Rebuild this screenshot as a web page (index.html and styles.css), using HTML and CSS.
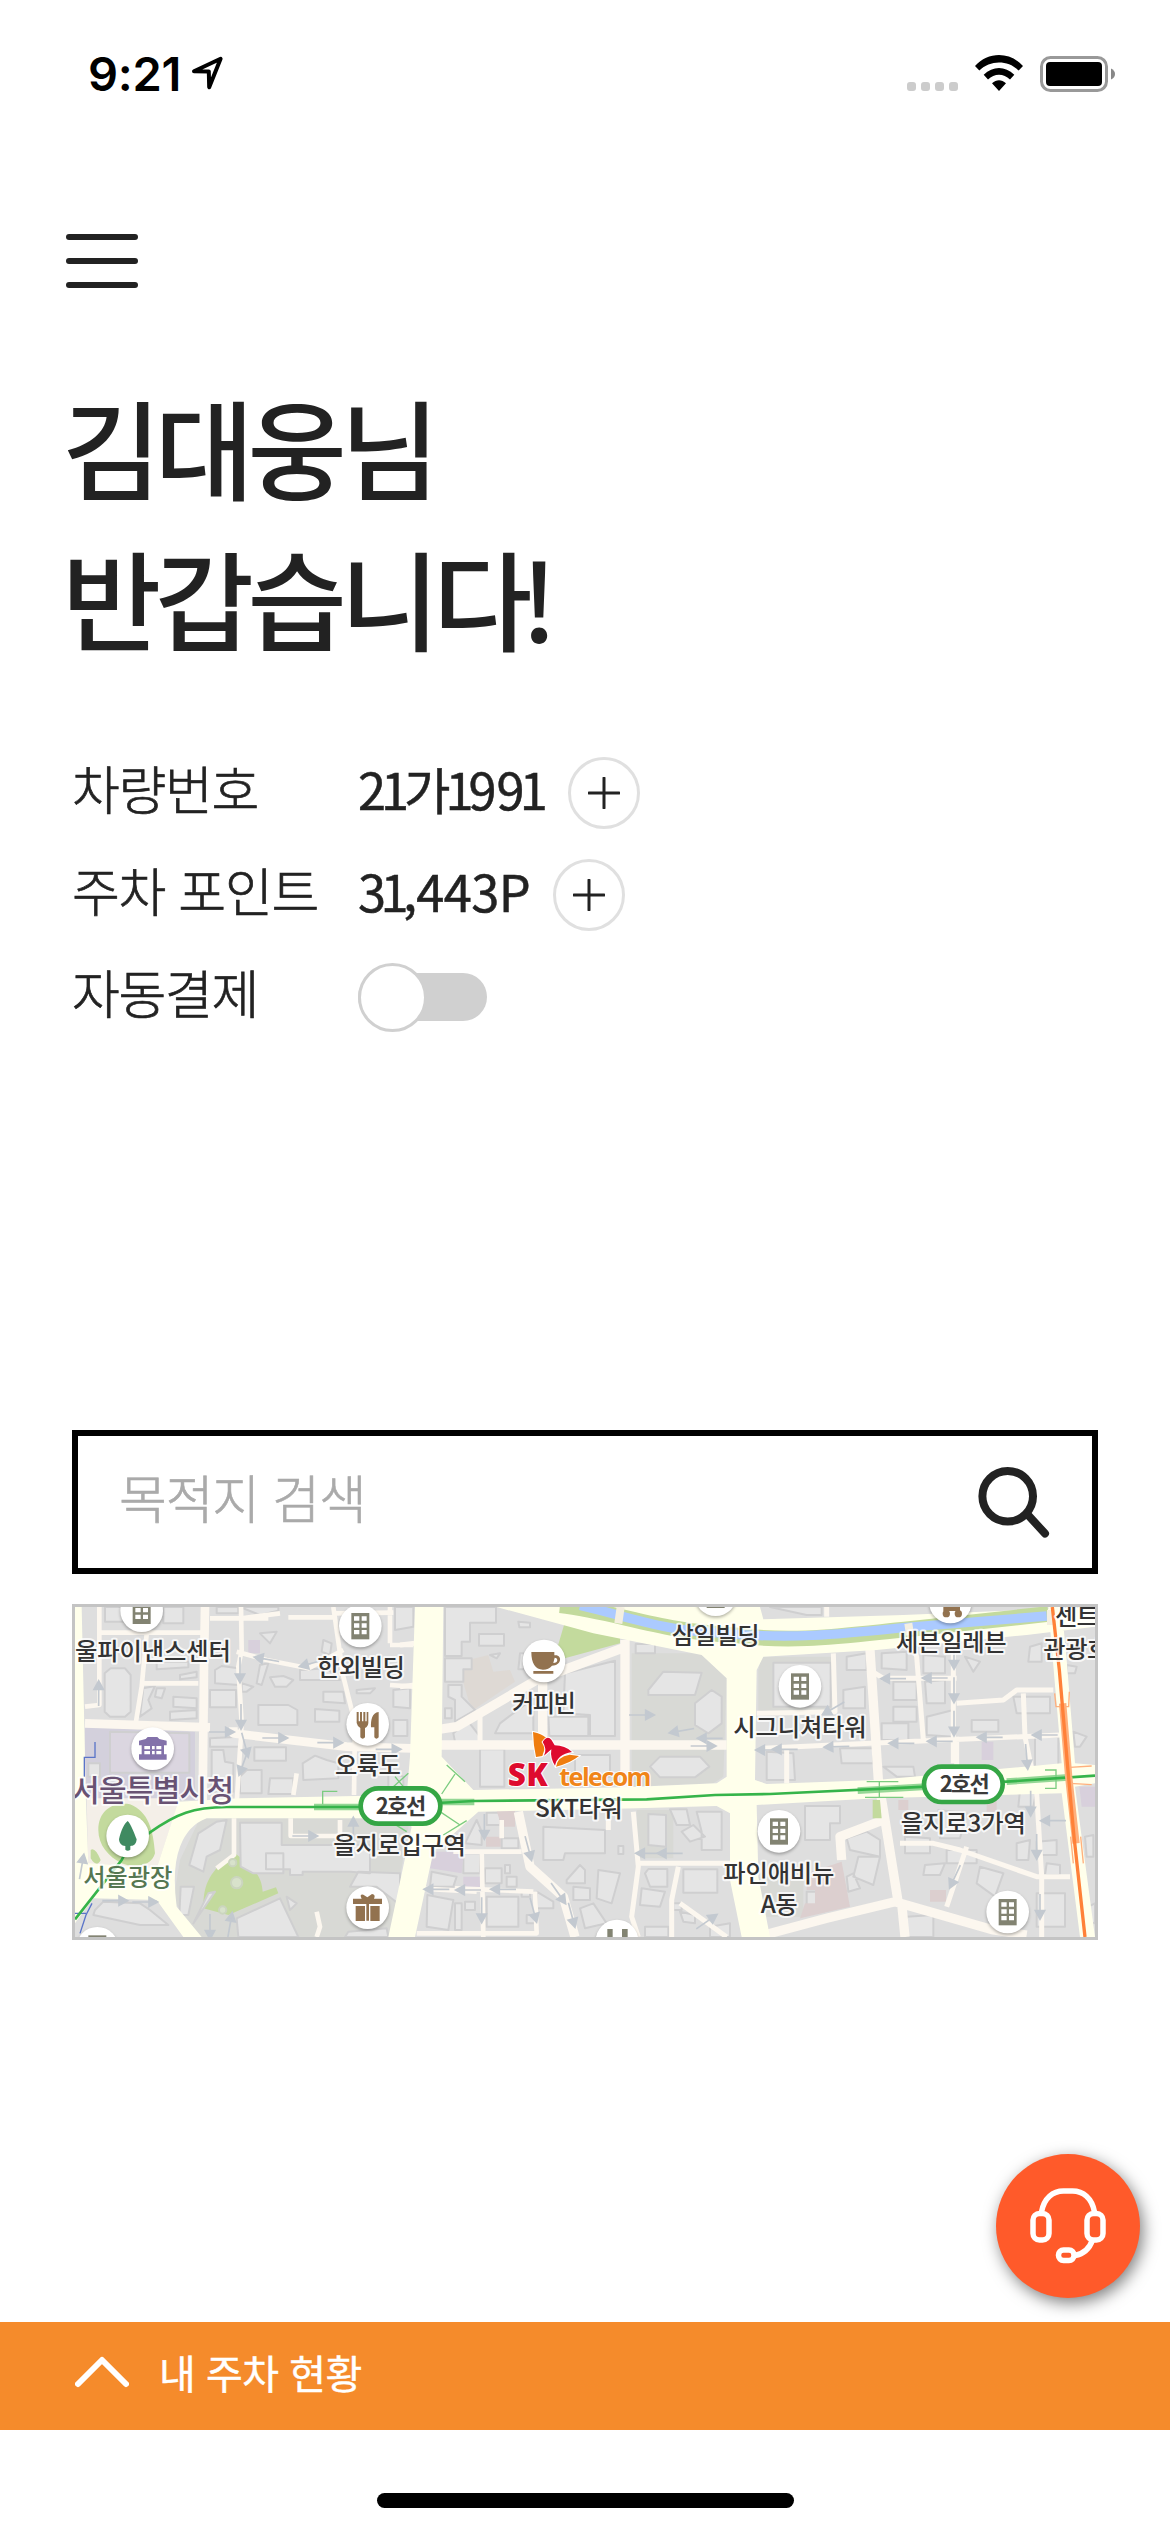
FILE: index.html
```html
<!DOCTYPE html>
<html lang="ko">
<head>
<meta charset="utf-8">
<title>주차</title>
<link rel="stylesheet" href="styles.css">
</head>
<body>
<header class="status">
  <div class="status-left">
    <span class="clock">9:21</span>
    <svg class="location" width="34" height="36" viewBox="0 0 34 36"><path d="M3 16.2 29.6 3.8 18.2 32.3 17.8 16.4Z"/></svg>
  </div>
  <div class="status-right">
    <span class="dots"><i></i><i></i><i></i><i></i></span>
    <svg class="wifi" width="48" height="37" viewBox="0 0 48 37"><path d="M0 11C13-3.6 35-3.6 48 11L43.7 15.5C33 4.8 15 4.8 4.3 15.5ZM8.7 19.8C18 10.7 30 10.7 39.3 19.8L35 24.5C28.600 18 19.400 18 13 24.500ZM17 28.200C21.500 24.300 26.500 24.300 31 28.200L24 36Z"/></svg>
    <svg class="battery" width="76" height="36" viewBox="0 0 76 36"><rect x="1.500" y="1.500" width="65" height="33" rx="9" fill="none" stroke="#999" stroke-width="3"/><rect x="6" y="6" width="56" height="24" rx="4"/><path d="M71 12.500Q75 14.500 75 18T71 23.500Z" fill="#888"/></svg>
  </div>
</header>

<button class="menu" aria-label="메뉴"><i></i><i></i><i></i></button>

<h1 class="greeting">김대웅님<br>반갑습니<span class="tight">다</span>!</h1>

<section class="account">
  <div class="row">
    <span class="label">차량번호</span>
    <span class="value">2<b class="one">1</b>가<b class="one">1</b>99<b class="one">1</b></span>
    <button class="plus" aria-label="추가"><svg width="32" height="32" viewBox="0 0 32 32"><path d="M16 1V31M1 16H31"/></svg></button>
  </div>
  <div class="row">
    <span class="label">주차 포인트</span>
    <span class="value points">3<b class="one">1</b>,443P</span>
    <button class="plus" aria-label="추가"><svg width="32" height="32" viewBox="0 0 32 32"><path d="M16 1V31M1 16H31"/></svg></button>
  </div>
  <div class="row">
    <span class="label">자동결제</span>
    <span class="toggle"><i class="knob"></i></span>
  </div>
</section>

<div class="search">
  <span class="placeholder">목적지 검색</span>
  <svg width="74" height="74" viewBox="0 0 74 74"><circle cx="31.700" cy="31.200" r="25.300"/><path d="M52 50 69 68.500"/></svg>
</div>

<div class="map">
<svg width="1020" height="330" viewBox="45 51 3060 990">
  <defs>
    <g id="pin"><circle class="pin" r="64"/></g>
    <g id="office"><circle class="pin" r="64"/><path fill="#828372" d="M-27-39H27V40H-27Z"/><path fill="#fff" d="M-19-29H-3V-16H-19ZM4-29H19V-16H4ZM-19-8H-3V5H-19ZM4-8H19V5H4ZM-19 12H-3V25H-19ZM4 12H19V25H4Z"/></g>
    <path id="arrow" class="arrow" d="M-38 0H20M12-14 38 0 12 14Z"/>
  </defs>
  <rect x="45" y="51" width="3060" height="990" fill="#dedede"/>

  <!-- special land -->
  <path fill="#d8d9d5" d="M420 685H1050L990 1041H420L340 930 360 810ZM1715 190H1920L2000 265 1990 560 1960 580 1715 590ZM2105 200H2315V365H2095V240ZM1730 660H1840V805H1730ZM2090 860H2230V980H2120Z"/>
  <path fill="#d3d0dc" d="M75 412 405 425V630H75Z"/>
  <path fill="#f4efe8" d="M80 625H360L290 835H85Z"/>
  <path fill="#ded9d4" d="M1225 210 1285 195 1300 245 1350 240 1365 275 1240 360 1225 330 1205 260Z"/>
  <path fill="#c3da9d" d="M115 720C115 660 160 635 210 643 265 665 280 720 285 790 275 830 220 835 185 820 145 800 115 765 115 720ZM92 780Q105 770 122 810 110 835 92 805ZM525 790C570 825 605 850 608 905L648 892 655 910 505 975 430 955C430 880 450 840 525 790ZM1515 95 1680 130V160L1495 210 1490 180Z"/>

  <!-- blocks of buildings -->
  <g class="building">
    <path fill="#dbd6e0" d="M150 425 388 430V548H150Z"/>
    <path d="M134 250 152 235H195L212 255V365L195 380H150L134 365ZM135 51H205V95H135ZM310 51H370V100H310ZM470 51H535V70H470ZM465 240 485 228 535 235V285L465 280ZM450 300H528V352H450ZM595 345H685L712 360V405H595ZM765 357 838 362V395H765ZM583 472H678V512H583ZM450 445 538 440V470H450ZM455 480H490L495 515 520 520V605H455ZM540 560 560 540H605V610H540ZM630 565H700V612H625ZM728 520 765 497 800 510 835 520V565L730 570ZM1000 300 1050 295V355L1000 350ZM1000 390H1042V438H1000ZM985 545 1030 560V595H985ZM1005 51H1060V110L1005 120ZM340 320 410 325V355L340 350ZM330 365 410 360V385L330 390ZM250 295 285 288 265 330 275 355 240 380ZM290 295H315L305 325 285 320ZM600 225 625 220 605 285 590 280ZM600 130 650 125 630 160ZM630 262 670 258 700 270 680 290H645ZM545 280 580 290 560 305H545ZM790 150 815 160 810 195 785 185ZM790 305H850L855 340 790 335ZM890 300 945 295 930 310H890ZM720 240 800 235 840 270H720ZM290 215H385V232L290 238ZM360 255 410 245V262L360 268ZM540 51H655V62L600 75Z"/>
    <path d="M85 520H120V560H85ZM105 960 130 935 240 940 270 960 325 1005H240L100 975ZM362 890H402L385 975 358 975ZM415 730 470 695 500 690 480 780 440 800 430 845 388 825ZM540 698H665V765H930V850L870 845H728V855H690V838H618V790H670V850H580L542 830ZM870 890 895 845 1020 850V945L950 890ZM680 920 710 940 690 960ZM530 985 660 925 715 1041H535ZM865 1025 980 1015 985 1041H855ZM445 910 465 905 400 1000Z"/>
    <path d="M1155 51H1308V98H1230V155H1205V198H1155ZM1155 205H1235V238H1210V275H1155ZM1257 132H1332V167H1257ZM1375 95 1410 98V112H1378ZM1290 195 1320 190 1310 205ZM1165 285H1205V320L1245 360 1185 395V330L1165 320ZM1155 355H1175V385H1155ZM1260 478H1333V590H1260ZM1180 430 1225 395 1260 440V460L1185 455ZM1320 400 1420 325V430H1305ZM1465 380H1585V438H1468ZM1380 190H1410V238H1375ZM1515 250 1665 212V438H1590V375L1510 370ZM1545 495H1650V560H1545ZM1727 162H1785V190H1727ZM1765 300 1810 245 1925 248 1905 315H1765ZM1905 340 1955 300 1985 320V400L1945 430 1905 405ZM1770 530 1800 500H1920L1948 530 1905 562H1800ZM1450 710 1635 720V790H1515L1510 810H1450ZM1765 672 1818 675V770L1765 765ZM1830 658H1880L1890 705H1850ZM1910 665H1985V780H1925V725ZM1865 725 1900 705 1935 740 1890 755ZM1615 840 1680 850 1655 940 1610 925ZM1520 870 1560 825 1575 840V880H1520ZM1540 890 1590 895V930H1540ZM1675 768H1690V792H1675ZM1755 850 1765 837H1822V890H1770ZM1745 895 1815 905 1800 950 1740 945ZM1870 838H1972V908H1870ZM1755 1010H1825V1041H1755ZM1860 965 1905 975V1000L1870 995ZM1950 1010 2010 1000V1041H1950ZM1840 940H1865V960H1840Z"/>
    <path d="M1102 915 1180 930 1165 1020 1100 1010ZM1280 920H1375V1010H1280ZM1210 790H1260V850H1210ZM1115 845 1190 860 1180 890H1110ZM1275 835H1325V880H1275ZM1340 860H1370V890H1340ZM1280 668H1320V705H1280ZM1325 745H1375V775H1325ZM1215 760 1250 690 1265 725V765ZM1430 905 1480 935V955H1430ZM1185 940H1205V1020H1185ZM1215 935H1245V960H1215ZM1400 975H1425V1000H1400ZM1560 955 1600 940 1640 1000 1575 1015ZM1335 825H1350V850H1335ZM1385 905H1410V920H1385Z"/>
    <path d="M2140 218H2312V350H2140ZM2350 300 2415 290V355H2350ZM2360 200 2420 190V240H2360ZM2120 485 2200 490 2205 570H2120ZM2340 475H2440V520H2345ZM2235 648H2340V700H2310V750H2235ZM2470 530H2560L2565 560H2510ZM2500 275H2570V330H2500ZM2500 350H2570V395H2500ZM2465 400H2545V450H2465ZM2595 275 2655 270V340H2600ZM2600 380 2680 360V440L2600 435ZM2465 190 2540 185V240L2465 235ZM2590 195 2655 200V250H2590ZM2735 390H2815V425H2735ZM2860 320H2970V370H2870ZM2925 440H2995V530H2925ZM2930 910H3015V1010H2930ZM2760 830 2830 850 2805 920 2750 880ZM2635 660 2720 670 2700 745 2640 745ZM2535 740 2610 745V790H2535ZM2595 825 2655 820 2640 855H2590ZM2360 745 2420 725 2460 750V800L2370 780ZM2395 800H2460L2440 885 2380 860ZM2360 860 2380 850 2400 895 2365 905ZM2540 980 2620 975V1041H2540ZM2715 200 2760 215 2740 245ZM2910 170 2945 160V215H2905ZM2240 905H2275V960H2240ZM3040 425 3080 440 3060 470H3045ZM3020 225 3050 230 3045 250H3020ZM2930 755 2990 750V795H2930ZM2960 820 3000 825V855H2955ZM3075 740 3100 735V800H3080ZM3085 950 3105 940V1000L3085 995ZM2660 780H2750V820H2660ZM2870 760 2910 750 2905 810H2870ZM2130 51H2285V75H2240ZM2880 600 2930 595 2920 650H2875Z"/>
  </g>
  <path fill="#d8d0dc" d="M1120 785H1212L1205 850 1110 835ZM1210 860H1260V893H1210ZM2765 455H2800V510H2765ZM3058 590H3105V650H3065ZM565 150H600V190H565Z"/>
  <path fill="#dccfcf" d="M1310 662H1365V710H1325ZM1278 740H1322V770H1278ZM2240 850 2345 815 2370 950 2220 985 2235 940H2265V900H2240ZM2515 630H2545V660H2515ZM2780 630H2810V665H2780ZM2610 900H2658V935H2610Z"/>

  <!-- side streets -->
  <g class="street">
    <path stroke-width="26" d="M75 400 450 412M435 51 432 230 428 640M520 412 520 430 860 470 1055 475"/>
    <path stroke-width="14" d="M118 51V345L75 350M118 128H430M450 85H625M685 82H820M262 110 245 290 228 395M250 280H415M543 51 545 180 535 230 545 400 530 640M530 185 620 210 745 235 850 180M545 85 660 70M820 51 850 260 885 400 882 615M820 70 1000 68M990 51V160M990 165H1060M990 285 1060 290M700 615 710 550M522 685V795L470 835M692 685V738H840V690M770 965 780 1010 770 1041M1185 895 1420 905M1265 780 1270 1041M1180 785H1385M1325 690V745M1070 1030H1430L1425 905M1250 905 1070 895"/>
    <path stroke-width="28" d="M1125 465H2000M1125 420 1190 410 1430 270 1700 170M1695 150V630M1448 260V465M1375 665 1410 830 1510 920 1545 1041"/>
    <path stroke-width="15" d="M1020 165 1065 160M1020 290 1065 285M1735 820H2020M1720 665 1735 830 1715 980 1735 1041M1855 830 1835 930 1835 1041M1860 940 1930 990 2000 1041M1645 670V720M1260 380V465M2300 51V80M2320 190 2325 365 2090 370M2180 470V580M2540 110 2570 200 2590 450M2680 190V520M2690 340 2830 330 2870 300H2980M2890 310 2895 440 2930 610 2945 860V1041M2520 760 2620 760 2700 780 2930 860H3030M2720 770 2660 950M2110 475 2430 460 3000 435M2690 440V530M2430 240 2470 265H2690"/>
    <path stroke-width="28" d="M2430 180 2455 570 2475 690 2515 940M2090 1041 2300 985 2505 935 2800 1020 2900 1035M2525 940 2535 1041M2345 810 2340 740 2470 690"/>
  </g>

  <!-- avenues -->
  <g fill="#ffffeb">
    <path d="M45 51H65L78 640 85 820 290 835 355 635 540 625 1040 615 1050 500 1065 51H1150L1145 500 1240 600 1700 592 1970 580 2000 560V265L1925 195 1600 130 1310 51H2100L2110 88 2530 75 3105 51V110L2900 135 2450 180 2110 200 2090 240 2085 570 2120 582 2450 570 3005 520 2965 51H3005L3020 210 3045 520 3105 525V580L3045 590 3105 1041H3060L3005 610 2450 625 2090 645 2095 860 2130 1041H2045L2010 870 2010 670 1970 648 1730 655 1400 662 1255 665 1120 785 1065 1041H985L1055 710 1020 685H440Q385 705 360 770T350 950L425 1041H370L290 930 100 925 45 1000Z"/>
  </g>

  <!-- stream and its banks -->
  <path fill="none" stroke="#c3da9d" stroke-width="47" d="M1500 46C1670 65 1800 125 2020 135 2200 160 2350 137 2540 118L2965 72"/>
  <path fill="none" stroke="#abcaff" stroke-width="28" d="M1560 46C1690 75 1800 120 1960 128 2200 150 2350 132 2540 112L2960 78"/>
  <path fill="none" stroke="#f4efe0" stroke-width="24" d="M1682 51 1675 100M2545 100 2550 135M2973 60V105"/>
  <path fill="#c3da9d" d="M2438 630H2460L2465 685H2438Z"/>
  <circle cx="530" cy="878" r="17" class="fountain"/><circle cx="518" cy="818" r="11" class="fountain"/><circle cx="488" cy="960" r="11" class="fountain"/>

  <!-- one-way arrows -->
  <use href="#arrow" x="485" y="426"/><use href="#arrow" x="645" y="444"/><use href="#arrow" x="810" y="458"/><use href="#arrow" x="985" y="478"/><use href="#arrow" x="735" y="738"/><use href="#arrow" x="165" y="932"/><use href="#arrow" x="255" y="936"/>
  <use href="#arrow" x="1745" y="375"/><use href="#arrow" x="1930" y="468"/>
  <use href="#arrow" transform="translate(1950 445) rotate(180)"/><use href="#arrow" transform="translate(1865 422) rotate(170)"/><use href="#arrow" transform="translate(1765 790) rotate(180)"/><use href="#arrow" transform="translate(1830 790) rotate(180)"/>
  <use href="#arrow" transform="translate(116 310) rotate(-90)"/><use href="#arrow" transform="translate(540 240) rotate(90)"/><use href="#arrow" transform="translate(543 380) rotate(90)"/><use href="#arrow" transform="translate(555 465) rotate(75)"/><use href="#arrow" transform="translate(550 520) rotate(110)"/><use href="#arrow" transform="translate(620 208) rotate(190)"/><use href="#arrow" transform="translate(755 220) rotate(165)"/><use href="#arrow" transform="translate(880 720) rotate(-90)"/><use href="#arrow" transform="translate(65 830) rotate(-80)"/>
  <use href="#arrow" transform="translate(1273 710) rotate(90)"/><use href="#arrow" transform="translate(1405 775) rotate(75)"/><use href="#arrow" transform="translate(1225 900) rotate(180)"/><use href="#arrow" transform="translate(1330 898) rotate(180)"/><use href="#arrow" transform="translate(1130 898) rotate(180)"/><use href="#arrow" transform="translate(1265 960) rotate(90)"/><use href="#arrow" transform="translate(1420 960) rotate(75)"/><use href="#arrow" transform="translate(1495 910) rotate(55)"/><use href="#arrow" transform="translate(1535 975) rotate(75)"/><use href="#arrow" transform="translate(1940 995) rotate(-35)"/><use href="#arrow" transform="translate(450 1010) rotate(90)"/><use href="#arrow" transform="translate(510 1005) rotate(-80)"/>
  <use href="#arrow" transform="translate(2500 266) rotate(180)"/><use href="#arrow" transform="translate(2625 264) rotate(180)"/><use href="#arrow" transform="translate(2682 200) rotate(90)"/><use href="#arrow" transform="translate(2682 300) rotate(90)"/><use href="#arrow" transform="translate(2682 400) rotate(90)"/><use href="#arrow" transform="translate(2320 355) rotate(150)"/><use href="#arrow" transform="translate(2125 480) rotate(180)"/><use href="#arrow" transform="translate(2175 478) rotate(180)"/><use href="#arrow" transform="translate(2330 470) rotate(178)"/><use href="#arrow" transform="translate(2525 460) rotate(180)"/><use href="#arrow" transform="translate(2640 454) rotate(180)"/><use href="#arrow" transform="translate(2790 442) rotate(180)"/><use href="#arrow" transform="translate(2955 435) rotate(180)"/><use href="#arrow" transform="translate(2900 500) rotate(85)"/><use href="#arrow" transform="translate(2912 640) rotate(90)"/><use href="#arrow" transform="translate(2930 770) rotate(90)"/><use href="#arrow" transform="translate(2940 950) rotate(90)"/><use href="#arrow" transform="translate(2685 860) rotate(115)"/><use href="#arrow" transform="translate(2980 692) rotate(180)"/>

  <!-- metro lines -->
  <path fill="none" stroke="#5b75c8" stroke-width="4" d="M105 456V502H73V560M96 940 78 975 60 1030M45 970H78"/>
  <path fill="none" stroke="#95d795" stroke-width="20" d="M762 651H930M1120 636H1243M2393 602 2600 590M2840 575 3025 562"/>
  <path fill="none" stroke="#7ccc80" stroke-width="4" d="M788 643V604H832M1000 590 1045 550M1005 560 1030 590M1145 612 1185 552M1160 525 1215 575M1140 665 1200 705M1150 735 1220 692M1000 700 1040 725M2420 575H2515M2458 575V622M2415 622H2530M2955 595H2988V540H2955"/>
  <path fill="none" stroke="#36b44a" stroke-width="8" d="M45 988 185 810 200 780 270 727C350 670 400 652 500 651H920L1240 633 1760 628 1965 615 2130 612 2600 590 2840 575 3105 557"/>
  <path fill="none" stroke="#ffb07d" stroke-width="22" d="M3008 340 3026 560 3048 760"/>
  <path fill="none" stroke="#ffb07d" stroke-width="4" d="M2984 310 2988 350H3026L3028 305M3030 532 3095 528M3030 580 3095 584M3032 740 3040 820M3062 740 3070 820"/>
  <path fill="none" stroke="#ff8138" stroke-width="10" d="M2977 51 2998 240 3022 520 3042 740 3075 1041"/>

  <!-- pins -->
  <use href="#office" x="245" y="62"/><use href="#office" x="901" y="108"/><use href="#office" x="2220" y="289"/><use href="#office" x="2157" y="724"/><use href="#office" x="2843" y="966"/><use href="#office" x="1967" y="14"/><use href="#office" x="112" y="1075"/>
  <use href="#pin" x="278" y="476"/><path fill="#8372aa" d="M237 458V452L257 447 263 441H292L298 447 320 452V466H312V493H320V509H237V493H245V466H237Z"/><path fill="#fff" d="M253 468H270V478H253ZM276 468H284V478H276ZM289 468H304V478H289ZM253 483H270V493H253ZM276 483H284V493H276ZM289 483H304V493H289Z"/>
  <use href="#pin" x="203" y="738"/><path fill="#3f8a61" d="M203 693C212 700 225 735 230 748 228 765 220 768 211 768V779Q203 785 196 779V768C184 768 178 760 177 748 183 720 195 698 203 693Z"/>
  <use href="#pin" x="923" y="403"/><path fill="#92724f" d="M890 366H896V394H900V366H906V394H910V366H916V394H920V366H925V399Q924 410 915 414V442Q908 450 901 442V414Q892 409 890 399ZM956 366V442Q949 450 943 442V412H933C932 390 936 368 956 366Z"/>
  <use href="#pin" x="923" y="953"/><path fill="#92724f" d="M879 926H905Q897 912 910 914L922 922 936 912Q948 914 942 926H966V942H927V992H919V942H879ZM887 948H915V993H887ZM931 948H959V993H931Z"/>
  <use href="#pin" x="1452" y="213"/><path fill="#92724f" d="M1414 186H1483V196C1508 192 1506 227 1476 227Q1466 239 1449 239C1426 239 1414 220 1414 186ZM1420 243H1480V251H1420Z"/><path fill="#fff" d="M1484 203 1480 219C1495 219 1495 203 1484 203Z"/>
  <use href="#pin" x="1671" y="1053"/><path fill="#828372" d="M1642 1017H1658V1041H1642ZM1686 1017H1703V1041H1686Z"/>
  <use href="#pin" x="2671" y="36"/><path fill="#92724f" d="M2650 51H2700V63H2650Z"/><circle cx="2659" cy="71" r="11" fill="#92724f"/><circle cx="2695" cy="71" r="11" fill="#92724f"/>

  <!-- place names -->
  <g class="place">
    <text x="45" y="210" textLength="468">울파이낸스센터</text>
    <text x="772" y="259" textLength="263">한외빌딩</text>
    <text x="825" y="551" textLength="198">오륙도</text>
    <text x="820" y="793" textLength="398">을지로입구역</text>
    <text x="1356" y="365" textLength="192">커피빈</text>
    <text x="1425" y="681" textLength="263">SKT타워</text>
    <text x="1835" y="162" textLength="264">삼일빌딩</text>
    <text x="2020" y="437" textLength="400">시그니쳐타워</text>
    <text x="1990" y="875" textLength="333">파인애비뉴</text>
    <text x="2102" y="968" textLength="111">A동</text>
    <text x="2508" y="184" textLength="332">세븐일레븐</text>
    <text x="2522" y="727" textLength="376">을지로3가역</text>
    <text x="2985" y="106" textLength="132">센트</text>
    <text x="2950" y="204" textLength="198">관광호</text>
    <text x="70" y="888" textLength="267" fill="#557752">서울광장</text>
    <text x="36" y="633" textLength="486" class="cityhall">서울특별시청</text>
  </g>
  <rect x="902" y="595" width="239" height="106" rx="53" class="badge"/><text x="947" y="673" textLength="152" class="line">2호선</text>
  <rect x="2592" y="530" width="236" height="106" rx="53" class="badge"/><text x="2639" y="606" textLength="150" class="line">2호선</text>

  <!-- brand mark -->
  <g class="brand">
    <path fill="#ef7d0f" d="M1419 426Q1445 430 1463 447 1446 453 1455 473L1447 498 1428 501Q1420 465 1419 426ZM1488 530Q1491 500 1529 494L1557 498Q1530 520 1488 530Z"/>
    <path fill="#de0b2e" d="M1448 456Q1462 435 1474 449L1484 466Q1515 466 1536 486 1492 493 1485 527 1470 504 1474 478L1452 497Q1462 477 1448 456Z"/>
    <text x="1343" y="587" textLength="120" class="sk">SK</text>
    <text x="1498" y="587" textLength="276" class="telecom">telecom</text>
  </g>
</svg>
</div>

<button class="support" aria-label="상담"><svg width="76" height="76" viewBox="0 0 76 76"><path d="M11.500 24C14 10 23 3 33.500 3H42.500C53 3 62 10 64.500 24M62.500 52Q58 65 45 67.500"/><rect x="3" y="25.500" width="16" height="26.500" rx="6.500"/><rect x="57" y="25.500" width="16" height="26.500" rx="6.500"/><rect x="28.500" y="62" width="15.500" height="10.500" rx="5"/></svg></button>

<footer class="parking-bar">
  <svg width="54" height="32" viewBox="0 0 54 32"><path d="M3 28 27 4 51 28"/></svg>
  <span>내 주차 현황</span>
</footer>
<div class="home-indicator"></div>
</body>
</html>
```
FILE: styles.css
```css
* { box-sizing: border-box; }
body {
  position: relative;
  display: flex;
  flex-direction: column;
  width: 1170px;
  height: 2532px;
  margin: 0;
  overflow: hidden;
  background: #fff;
  color: #222;
  font-family: "Noto Sans CJK KR", sans-serif;
}
button { padding: 0; border: 0; background: none; }
svg { display: block; flex: none; }

.status { display: flex; justify-content: space-between; height: 141px; padding: 50px 54px 0 88px; }
.status-left, .status-right { display: flex; align-items: flex-start; }
.clock { width: 103px; color: #000; font: 600 47px/48px Inter, sans-serif; letter-spacing: -0.3px; white-space: nowrap; }
.location { margin-top: 5px; fill: none; stroke: #000; stroke-width: 4; stroke-linejoin: round; }
.dots { display: flex; gap: 5px; margin: 32px 17px 0 0; }
.dots i { width: 9px; height: 9px; border-radius: 3px; background: #ccc; }
.wifi { margin: 5px 17px 0 0; }
.battery { margin-top: 6px; }

.menu { display: flex; flex-direction: column; gap: 18px; width: 72px; margin: 93px 0 0 66px; }
.menu i { height: 6px; border-radius: 3px; background: #222; }

.greeting { margin: 82px 0 0 62px; font-size: 108px; font-weight: 500; line-height: 151px; letter-spacing: -6.600px; white-space: nowrap; }
.tight { letter-spacing: -12px; }

.account { margin: 70px 0 0 72px; }
.row { display: flex; align-items: center; height: 102px; }
.label { width: 286px; font-size: 52px; font-weight: 300; line-height: 60px; letter-spacing: -1.300px; -webkit-text-stroke: 0.7px; white-space: nowrap; }
.value { width: 182px; font-size: 50.500px; line-height: 60px; -webkit-text-stroke: 0.5px; white-space: nowrap; }
.label, .value { padding-bottom: 10px; }
.points { width: 167px; letter-spacing: -0.6px; }
.one { margin: 0 -5px; font-weight: inherit; }
.plus { display: grid; place-items: center; width: 72px; height: 72px; margin-left: 28px; border: 3px solid #e0e0e0; border-radius: 50%; }
.plus path { fill: none; stroke: #222; stroke-width: 3; stroke-linecap: round; }
.toggle { display: flex; align-items: center; width: 129px; height: 48px; border-radius: 24px; background: #d0d0d0; }
.knob { flex: none; width: 69px; height: 69px; border: 3px solid #d0d0d0; border-radius: 50%; background: #fff; }

.search { display: flex; align-items: center; justify-content: space-between; width: 1026px; height: 144px; margin: 382px 0 0 72px; padding: 0 42px 0 41px; border: 6px solid #000; }
.placeholder { padding-bottom: 10px; color: #aaa; font-size: 52px; font-weight: 300; line-height: 60px; letter-spacing: -1.2px; -webkit-text-stroke: 0.6px; }
.search svg { fill: none; stroke: #222; stroke-width: 8; stroke-linecap: round; }

.map { width: 1026px; height: 336px; margin: 30px 0 0 72px; border: 3px solid #c4c4c4; overflow: hidden; }
.building { fill: #e5e5e5; stroke: #cfcfd0; stroke-width: 6; stroke-linejoin: round; }
.street { fill: none; stroke: #fcf7ef; stroke-linejoin: round; }
.fountain { fill: #d8e2cb; stroke: #cbd5bf; stroke-width: 6; }
.arrow { fill: #c3c9d0; stroke: #c3c9d0; stroke-width: 5; }
.pin { fill: #fff; filter: drop-shadow(0 5px 4px rgba(0, 0, 0, .3)); }
.place text { stroke: #fff; stroke-width: 12; stroke-linejoin: round; paint-order: stroke; stroke-opacity: .8; font-size: 73px; font-weight: 500; }
.place { fill: #333; }
.place .cityhall { fill: #685273; font-size: 90px; }
.badge { fill: #fff; stroke: #35a645; stroke-width: 14; }
.line { fill: #3a3a3a; font-size: 66px; font-weight: 700; }
.brand { stroke: #fff; stroke-width: 6; paint-order: stroke; }
.sk { fill: #de0b2e; font: 800 94px "Open Sans", sans-serif; }
.telecom { fill: #f08519; font: 700 76px "Open Sans", sans-serif; }

.support { display: grid; place-items: center; width: 144px; height: 144px; margin: 214px 0 0 996px; border-radius: 50%; background: #ff5a2a; box-shadow: 3px 5px 16px rgba(0, 0, 0, .5); }
.support path, .support rect { fill: none; stroke: #fff; stroke-width: 5.500; }

.parking-bar { display: flex; align-items: center; height: 108px; margin-top: 24px; padding-left: 75px; background: #f58b2b; color: #fff; font-size: 40px; line-height: 60px; white-space: nowrap; }
.parking-bar svg { margin: -8px 30px 0 0; fill: none; stroke: #fff; stroke-width: 6; stroke-linecap: round; stroke-linejoin: round; }
.parking-bar span { margin-top: -9px; letter-spacing: -0.5px; -webkit-text-stroke: 0.4px; }
.home-indicator { width: 417px; height: 15px; margin: 63px 0 0 377px; border-radius: 8px; background: #000; }
```
